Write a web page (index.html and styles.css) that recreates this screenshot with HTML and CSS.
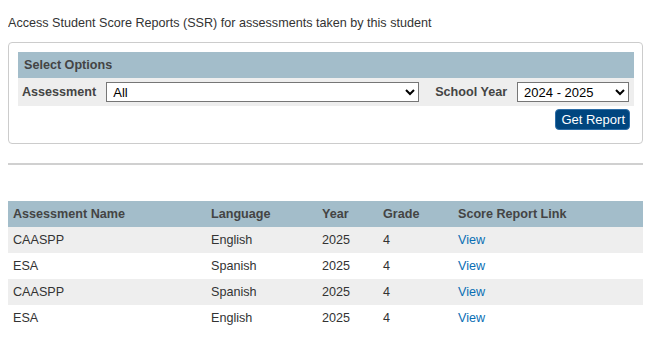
FILE: index.html
```html
<!doctype html>
<html>
<head>
    <meta charset="utf-8">
    <title>Student Score Reports</title>
    <link rel="stylesheet" href="styles.css">
</head>
<body>

<p class="intro">Access Student Score Reports (SSR) for assessments taken by this student</p>

<div class="panel">
    <div class="panel-title">Select Options</div>
    <div class="options">
        <label class="opt-label" for="assessment">Assessment</label>
        <select id="assessment" class="sel sel-wide">
            <option>All</option>
        </select>
        <label class="opt-label opt-year" for="year">School Year</label>
        <select id="year" class="sel sel-year">
            <option>2024 - 2025</option>
        </select>
    </div>
    <div class="actions">
        <button class="btn">Get Report</button>
    </div>
</div>

<hr class="divider">

<table class="reports">
    <thead>
        <tr>
            <th class="c-name">Assessment Name</th>
            <th class="c-lang">Language</th>
            <th class="c-year">Year</th>
            <th class="c-grade">Grade</th>
            <th>Score Report Link</th>
        </tr>
    </thead>
    <tbody>
        <tr><td>CAASPP</td><td>English</td><td>2025</td><td>4</td><td><a href="#">View</a></td></tr>
        <tr><td>ESA</td><td>Spanish</td><td>2025</td><td>4</td><td><a href="#">View</a></td></tr>
        <tr><td>CAASPP</td><td>Spanish</td><td>2025</td><td>4</td><td><a href="#">View</a></td></tr>
        <tr><td>ESA</td><td>English</td><td>2025</td><td>4</td><td><a href="#">View</a></td></tr>
    </tbody>
</table>

</body>
</html>
```

FILE: styles.css
```css
body {
    margin: 8px 11px 8px 8px;
    font-family: "Liberation Sans", Arial, sans-serif;
    font-size: 12.6px;
    color: #333;
    background: #fff;
}

.intro {
    margin: 8px 0 12px;
    font-size: 12.6px;
    color: #333;
}

.panel {
    border: 1px solid #ccc;
    border-radius: 4px;
    padding: 9px 8px 13px 9px;
}

.panel-title {
    background: #a3bdca;
    color: #444;
    font-weight: bold;
    height: 26px;
    line-height: 26px;
    padding-left: 6px;
}

.options {
    display: flex;
    align-items: center;
    background: #eee;
    height: 28px;
    padding: 0 4px;
    white-space: nowrap;
}

.opt-label {
    font-weight: bold;
    color: #444;
    margin-right: 10px;
    flex-shrink: 0;
}

.opt-year {
    margin-left: 16px;
}

.sel {
    flex-shrink: 0;
    height: 20px;
    font-family: "Liberation Sans", Arial, sans-serif;
    font-size: 13px;
    color: #000;
    border: 1px solid #767676;
    background: #fff;
    padding: 0 2px;
}

.sel-wide {
    width: 313px;
}

.sel-year {
    width: 112px;
}

.actions {
    display: flex;
    justify-content: flex-end;
    padding: 3px 4px 0 0;
}

.btn {
    background: #00467f;
    color: #fff;
    border: 1px solid #2d6ea8;
    border-radius: 4px;
    font-family: "Liberation Sans", Arial, sans-serif;
    font-size: 13px;
    padding: 2px 4px 2px 5px;
    height: 21px;
}

.divider {
    border: 0;
    border-top: 2px solid #d0d0d0;
    margin: 19px 0 0;
}

.reports {
    margin-top: 36px;
    width: 100%;
    border-collapse: collapse;
}

.reports th,
.reports td {
    text-align: left;
    height: 26px;
    padding: 0 5px;
}

.reports th {
    background: #a3bdca;
    color: #444;
    font-weight: bold;
}

.reports tbody tr:nth-child(odd) {
    background: #eee;
}

.c-name { width: 188px; }
.c-lang { width: 101px; }
.c-year { width: 51px; }
.c-grade { width: 65px; }

.reports a {
    color: #0a6eb4;
    text-decoration: none;
}
```
